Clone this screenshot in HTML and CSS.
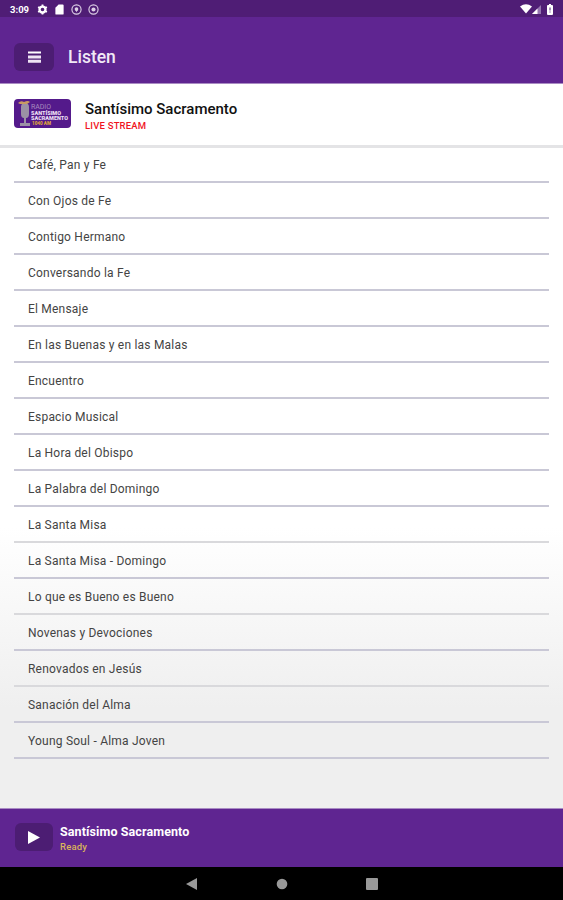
FILE: index.html
```html
<!DOCTYPE html>
<html lang="es">

<head>
  <meta charset="UTF-8">
  <title>Listen</title>
  <link rel="stylesheet" href="styles.css">
</head>

<body>

  <div class="status-bar">
    <span class="hora">3:09</span>
    <svg class="icono" viewBox="0 0 24 24"><circle cx="12" cy="12" r="6.5" fill="none" stroke="#fff" stroke-width="5"/><path d="M12 1v5M12 18v5M2.500 6.500l4.300 2.500M17.200 15l4.300 2.500M2.500 17.500l4.300-2.500M17.200 9l4.300-2.500" stroke="#fff" stroke-width="4"/></svg>
    <svg class="icono" viewBox="0 0 24 24"><path d="M10 1h9a2 2 0 0 1 2 2v18a2 2 0 0 1-2 2H5a2 2 0 0 1-2-2V8z" fill="#fff"/></svg>
    <svg class="icono" viewBox="0 0 24 24"><circle cx="12" cy="12" r="10" fill="none" stroke="#ddd0e6" stroke-width="2.500"/><circle cx="12" cy="11" r="4" fill="#ddd0e6"/><path d="M9 12h6l-3 6z" fill="#ddd0e6"/></svg>
    <svg class="icono" viewBox="0 0 24 24"><circle cx="12" cy="12" r="10" fill="none" stroke="#ddd0e6" stroke-width="2.500"/><circle cx="12" cy="12" r="4.500" fill="#ddd0e6"/></svg>
    <div class="senal">
      <svg width="12" height="10" viewBox="0 0 12 10"><path d="M0 2.500Q6-2 12 2.500L6 9.500z" fill="#fff"/></svg>
      <svg width="9" height="9" viewBox="0 0 9 9"><path d="M9 0v9H0z" fill="#9575b0"/><path d="M5.500 3.500V9H0z" fill="#fff"/></svg>
      <svg class="bateria" width="6" height="11" viewBox="0 0 6 11"><path d="M2 0h2v1h1q1 0 1 1v8q0 1-1 1H1q-1 0-1-1V2q0-1 1-1h1z" fill="#fff"/><path d="M3 3.500v3M3 7.500v1" stroke="#4c1d73"/></svg>
    </div>
  </div>

  <header class="cabecera">
    <button class="boton" aria-label="Menú">
      <svg width="13" height="12" viewBox="0 0 13 12"><path d="M0 1.500h13" stroke="#fff" stroke-width="2"/><path d="M0 6h13M0 10.300h13" stroke="#eee4f4" stroke-width="3"/></svg>
    </button>
    <h1>Listen</h1>
  </header>

  <section class="en-vivo">
    <svg class="logo" viewBox="0 0 57 29">
      <rect width="57" height="29" rx="4" fill="#541a8b"/>
      <path d="M7 8q0-4 4-4t4 4v7q0 4-3 4v5h4v3H6v-3h4v-5q-3 0-3-4z" fill="#9b91a5"/>
      <path d="M4 4q3-3 6-1 4-2 6 0l-3 2-7 0z" fill="#c99a62"/>
      <text x="17" y="10" font-size="7" textLength="20" fill="#a68abf">RADIO</text>
      <text x="17" y="15.500" font-size="5" font-weight="900" textLength="30" lengthAdjust="spacingAndGlyphs" fill="#eadff2">SANTÍSIMO</text>
      <text x="17" y="21" font-size="5" font-weight="900" textLength="37" lengthAdjust="spacingAndGlyphs" fill="#eadff2">SACRAMENTO</text>
      <text x="18" y="26" font-size="4.500" font-weight="900" textLength="19" lengthAdjust="spacingAndGlyphs" fill="#dda33c">1040 AM</text>
    </svg>
    <div>
      <h2>Santísimo Sacramento</h2>
      <p class="etiqueta">LIVE STREAM</p>
    </div>
  </section>

  <main class="contenido">
    <ul class="programas">
      <li>Café, Pan y Fe</li>
      <li>Con Ojos de Fe</li>
      <li>Contigo Hermano</li>
      <li>Conversando la Fe</li>
      <li>El Mensaje</li>
      <li>En las Buenas y en las Malas</li>
      <li>Encuentro</li>
      <li>Espacio Musical</li>
      <li>La Hora del Obispo</li>
      <li>La Palabra del Domingo</li>
      <li>La Santa Misa</li>
      <li>La Santa Misa - Domingo</li>
      <li>Lo que es Bueno es Bueno</li>
      <li>Novenas y Devociones</li>
      <li>Renovados en Jesús</li>
      <li>Sanación del Alma</li>
      <li>Young Soul - Alma Joven</li>
    </ul>
  </main>

  <footer class="reproductor">
    <button class="boton" aria-label="Reproducir">
      <svg width="12" height="13" viewBox="0 0 12 13"><path d="M0 0l12 6.500L0 13z" fill="#fff"/></svg>
    </button>
    <div>
      <p class="titulo">Santísimo Sacramento</p>
      <p class="estado">Ready</p>
    </div>
  </footer>

  <nav class="navegacion">
    <svg width="12" height="12" viewBox="0 0 12 12"><path d="M0 6L11 0v12z" fill="#999"/></svg>
    <svg width="12" height="12" viewBox="0 0 12 12"><circle cx="6" cy="6" r="5.300" fill="#999"/></svg>
    <svg width="12" height="12" viewBox="0 0 12 12"><rect width="12" height="12" rx="1" fill="#999"/></svg>
  </nav>

</body>

</html>
```

FILE: styles.css
```css
* {
  box-sizing: border-box;
  margin: 0;
  padding: 0;
}

body {
  display: flex;
  flex-direction: column;
  height: 900px;
  font-family: Roboto, sans-serif;
  background: #fff;
  overflow: hidden;
}

svg {
  display: block;
}

.status-bar {
  display: flex;
  align-items: center;
  height: 17px;
  padding: 1px 10px 0 10px;
  background: #4f1d75;
  color: #fff;
}

.hora {
  width: 27px;
  font-size: 9.5px;
  font-weight: 700;
}

.icono {
  width: 11px;
  height: 11px;
  margin-right: 6px;
}

.senal {
  display: flex;
  align-items: center;
  margin-left: auto;
}

.bateria {
  margin-left: 6px;
}

.cabecera {
  display: flex;
  align-items: center;
  height: 67px;
  padding: 13px 15px 0 14px;
  background: #5f2591;
  border-bottom: 1px solid #a98bc3;
  color: #fff;
}

.cabecera h1 {
  margin-left: 14px;
  font-size: 17.5px;
  font-weight: 500;
  color: #f1e9f6;
}

.boton {
  display: flex;
  align-items: center;
  justify-content: center;
  width: 40px;
  height: 28px;
  background: #4c1d73;
  border: none;
  border-radius: 6px;
}

.en-vivo {
  display: flex;
  height: 64px;
  padding: 15px 14px 0;
  border-bottom: 3px solid #e4e4e6;
}

.logo {
  width: 57px;
  height: 29px;
  margin-right: 14px;
}

.en-vivo h2 {
  padding-top: 1px;
  font-size: 15px;
  line-height: 18px;
  font-weight: 500;
  color: #111;
}

.etiqueta {
  padding-top: 2px;
  font-size: 9.5px;
  line-height: 12px;
  font-weight: 500;
  letter-spacing: 0.2px;
  color: #f0141e;
}

.contenido {
  flex: 1;
  padding: 0 14px;
  background: linear-gradient(#fff 380px, #efefef 560px);
}

.programas {
  list-style: none;
}

.programas li {
  height: 35.97px;
  padding-left: 14px;
  border-bottom: 2px solid #c9c8d6;
  font-size: 12px;
  line-height: 36px;
  letter-spacing: 0.21px;
  color: #444;
}

.programas li:first-child {
  height: 35px;
  line-height: 35px;
}

/* separadores más claros */
.programas li:nth-child(11),
.programas li:nth-child(13),
.programas li:nth-child(15) {
  border-bottom-color: #d9d9dc;
}

.reproductor {
  display: flex;
  align-items: center;
  height: 59px;
  padding: 0 15px 2px;
  background: #5f2591;
  border-top: 1px solid #a98bc3;
  color: #fff;
}

.reproductor .boton {
  width: 38px;
  margin-right: 7px;
}

.titulo {
  padding-top: 3px;
  font-size: 12.5px;
  line-height: 16px;
  font-weight: 700;
  letter-spacing: 0.1px;
}

.estado {
  font-size: 9.5px;
  line-height: 13px;
  font-weight: 500;
  letter-spacing: 0.2px;
  color: #d9b45a;
}

.navegacion {
  display: flex;
  align-items: center;
  justify-content: center;
  gap: 78px;
  height: 33px;
  background: #000;
}
```
